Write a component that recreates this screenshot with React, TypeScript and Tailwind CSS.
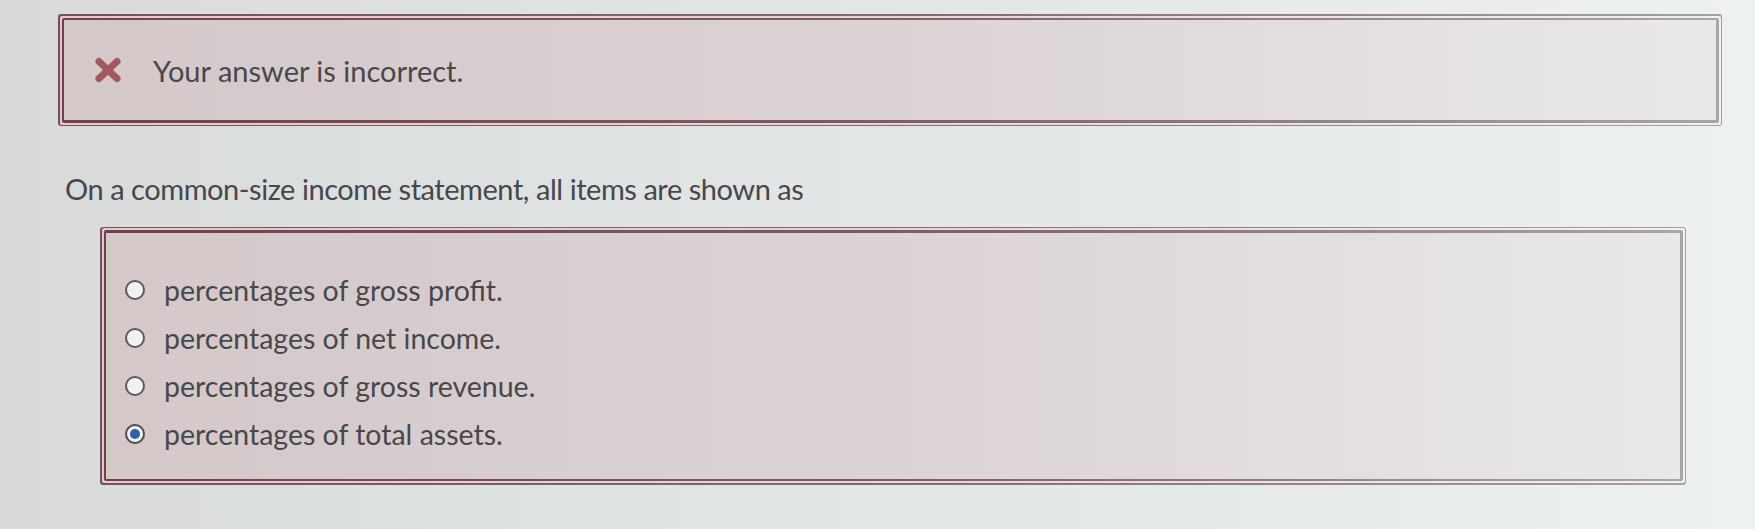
import React from 'react';

const options = [
  { label: 'percentages of gross profit.', checked: false },
  { label: 'percentages of net income.', checked: false },
  { label: 'percentages of gross revenue.', checked: false },
  { label: 'percentages of total assets.', checked: true },
];

// double frame: dark outer line, pink gap, dark inner line
function Frame({ className, children }: { className: string; children: React.ReactNode }) {
  return (
    <div className={`rounded-[3px] bg-gradient-to-r from-[#74525a] via-[#86686e] to-[#a4a0a3] p-[1.5px] ${className}`}>
      <div className="rounded-[2px] bg-gradient-to-r from-[#e9c6ca] via-[#ead3d6] to-[#f2f0f2] p-[2px]">
        <div className="rounded-[2px] bg-gradient-to-r from-[#6a444d] via-[#7c5d64] to-[#a9a5a8] p-[2.5px]">
          <div className="bg-gradient-to-r from-[#d4c8c9] via-[#dcd3d4] to-[#e9e8eb]">{children}</div>
        </div>
      </div>
    </div>
  );
}

function Radio({ checked }: { checked: boolean }) {
  return (
    <span
      className={`flex h-[20px] w-[20px] shrink-0 items-center justify-center rounded-full border-[2.5px] ${
        checked ? 'border-[#4a4a50] bg-[#eef2f8]' : 'border-[#5a5a5e] bg-[#f1f1f3]'
      }`}
    >
      {checked && <span className="h-[10px] w-[10px] rounded-full bg-[#2a63aa]" />}
    </span>
  );
}

export default function App() {
  return (
    <div
      className="h-[529px] w-[1755px] overflow-hidden bg-gradient-to-r from-[#d8dbda] via-[#e2e6e6] to-[#eef1f2] text-[#48484b]"
      style={{ fontFamily: 'Lato, "Open Sans", sans-serif' }}
    >
      <div className="pt-[14px] pl-[58px]">
        <Frame className="w-[1664px]">
          <div className="flex h-[100px] items-center pl-[30px]">
            <svg width="28" height="26" viewBox="0 0 28 26" className="shrink-0">
              <path d="M5 4.5 L23 21.5 M23 4.5 L5 21.5" stroke="#a4575c" strokeWidth="7" strokeLinecap="round" />
            </svg>
            <span className="ml-[31px] text-[29px] leading-none">Your answer is incorrect.</span>
          </div>
        </Frame>
      </div>

      <p className="mt-[46px] ml-[65px] text-[29px] leading-[1.2] tracking-[-0.45px]">
        On a common-size income statement, all items are shown as
      </p>

      <div className="mt-[20px] pl-[100px]">
        <Frame className="w-[1586px]">
          <div className="flex h-[246px] flex-col pt-[33px] pl-[19px]">
            {options.map((o) => (
              <label key={o.label} className="flex h-[48px] items-center gap-[19px] text-[28.5px]">
                <Radio checked={o.checked} />
                <span className="leading-[48px]">{o.label}</span>
              </label>
            ))}
          </div>
        </Frame>
      </div>
    </div>
  );
}
